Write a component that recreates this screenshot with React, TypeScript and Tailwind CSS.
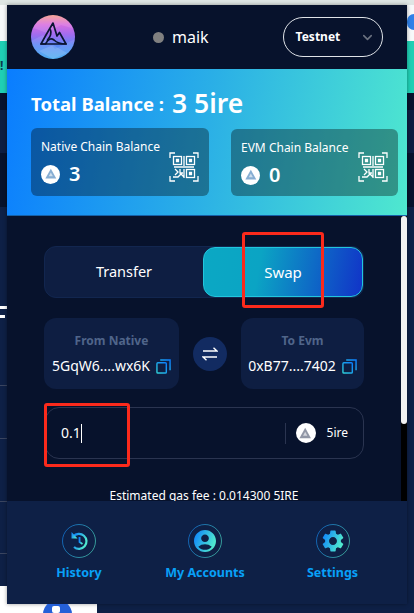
import { ChevronDown } from "lucide-react";

const font = "font-['Noto_Sans',sans-serif]";

function FireMark() {
  return (
    <svg viewBox="0 0 44 44" className="w-full h-full" fill="none">
      <path d="M0 0 H44 V14 L30 10 L16 18 L0 12 Z" fill="#ffffff" fillOpacity="0.12" />
      <path d="M0 26 L12 20 L24 34 L44 24 V44 H0 Z" fill="#ffffff" fillOpacity="0.10" />
      <path d="M8 36 L22 30 L36 38 L22 44 Z" fill="#ffffff" fillOpacity="0.14" />
      <g stroke="#0b1533" strokeWidth="1.700" strokeLinejoin="round" strokeLinecap="round">
        <path d="M22 8 L15 20 L10 29 L14.500 29 C17 24 20 22.500 23 25 C26 28 29 29 35 29 L28.500 17.500 L26 21 L22 8 Z" />
        <path d="M10 29 L35 29" />
        <path d="M19.500 15 C21 19 19 22 16.500 25" />
      </g>
    </svg>
  );
}

function TokenIcon({ color, className }: { color: string; className: string }) {
  return (
    <div className={`rounded-full bg-white flex items-center justify-center shrink-0 ${className}`}>
      <svg viewBox="0 0 20 20" className="w-[72%] h-[72%]" fill={color}>
        <path d="M10 2.500 L18 17 L2 17 Z" fillOpacity="0.75" />
        <path d="M10 8 L13 13.500 L7 13.500 Z" fill="#ffffff" fillOpacity="0.6" />
      </svg>
    </div>
  );
}

function QrIcon() {
  return (
    <svg viewBox="0 0 30 30" className="w-[30px] h-[30px]" fill="none" stroke="#ffffff" strokeWidth="1.300">
      <path d="M1 6 V1 H6 M24 1 H29 V6 M29 24 V29 H24 M6 29 H1 V24" />
      <rect x="4.500" y="4.500" width="8" height="8" />
      <rect x="17.500" y="4.500" width="8" height="8" />
      <rect x="17.500" y="17.500" width="8" height="8" />
      <path d="M5 15 H25 M15 4 V14 M6 17 L9 20 L6 23 M11 17 V21 H14 M4 25 H9 L12 22 L15 25 M15 17 V26" />
      <path d="M7.500 7.500 h2 v2 h-2 z M20.500 7.500 h2 v2 h-2 z M20.500 20.500 h2 v2 h-2 z" fill="#ffffff" />
    </svg>
  );
}

function CopyIcon() {
  return (
    <svg viewBox="0 0 16 16" className="w-[15px] h-[15px] shrink-0" fill="none" strokeWidth="1.500">
      <defs>
        <linearGradient id="copyGrad" x1="0" y1="1" x2="1" y2="0">
          <stop offset="0" stopColor="#2fd0d8" />
          <stop offset="1" stopColor="#0a7dff" />
        </linearGradient>
      </defs>
      <rect x="1" y="4" width="10" height="11" rx="1" stroke="url(#copyGrad)" />
      <path d="M4.500 1 H15 V12" stroke="url(#copyGrad)" />
    </svg>
  );
}

function NavIcon({ id, children }: { id: string; children: React.ReactNode }) {
  return (
    <svg viewBox="0 0 34 34" className="w-[34px] h-[34px]" fill="none">
      <defs>
        <linearGradient id={id} x1="0" y1="0" x2="1" y2="0.400">
          <stop offset="0" stopColor="#0a7dff" />
          <stop offset="1" stopColor="#4fe8cf" />
        </linearGradient>
      </defs>
      <circle cx="17" cy="17" r="16.500" stroke={`url(#${id})`} strokeOpacity="0.600" />
      {children}
    </svg>
  );
}

function NavItem({ label, width, icon }: { label: string; width: string; icon: React.ReactNode }) {
  return (
    <div className={`flex flex-col items-center ${width}`}>
      {icon}
      <span className="mt-[5px] text-[12.500px] leading-[20px] font-bold text-[#08a0f8] whitespace-nowrap">{label}</span>
    </div>
  );
}

function AddressCard({ title, value, width }: { title: string; value: string; width: string }) {
  return (
    <div className={`h-[71px] rounded-[12px] bg-[#0e1e42] flex flex-col items-center pt-[13px] ${width}`}>
      <span className="text-[12px] leading-[20px] font-bold text-[#50658a]">{title}</span>
      <div className="flex items-center gap-[6px] mt-[5px]">
        <span className="text-[14px] leading-[20px] text-white whitespace-nowrap">{value}</span>
        <CopyIcon />
      </div>
    </div>
  );
}

function BalanceCard({ title, value, className }: { title: string; value: string; className: string }) {
  return (
    <div className={`rounded-[6px] pl-[10px] pr-[10px] pt-[9px] flex justify-between bg-black/35 ${className}`}>
      <div>
        <div className="text-[12px] leading-[20px] text-white whitespace-nowrap">{title}</div>
        <div className="flex items-center gap-[9px] mt-[5px]">
          <TokenIcon color="#5f93c4" className="w-[19px] h-[19px]" />
          <span className="text-[20px] leading-[24px] font-semibold text-white">{value}</span>
        </div>
      </div>
      <div className="self-end mb-[14px]">
        <QrIcon />
      </div>
    </div>
  );
}

export default function App() {
  return (
    <div className={`relative w-[414px] h-[613px] overflow-hidden bg-[#0e2046] ${font}`}>
      {/* page behind the extension popup */}
      <div className="flex flex-col h-full">
        <div className="h-[5px] bg-[#dfe6e4]" />
        <div className="h-[36px] bg-[#f7f9fa]" />
        <div className="h-[52px] bg-[#1fcfb4]" />
        <div className="h-[17px] bg-[#07122c]" />
        <div className="h-[43px] bg-[#0e1e42]" />
        <div className="h-[54px] bg-[#07122c]" />
        <div className="h-[379px] bg-[#0e2046]" />
        <div className="flex-1 flex">
          <div className="w-[97px] bg-white" />
          <div className="flex-1 bg-[#0e2046]" />
        </div>
      </div>

      {/* bits of the page showing at the edges */}
      <span className="absolute left-0 top-[60px] text-[12px] leading-[12px] font-bold text-[#0b3a4a]">!</span>
      <div className="absolute left-[407px] top-[14px] w-[14px] h-[16px] rounded-full bg-[#2f80e8]" />
      <div className="absolute left-0 top-[306px] w-[7px] h-[3px] bg-white" />
      <div className="absolute left-0 top-[315px] w-[5px] h-[3px] bg-white" />
      <div className="absolute left-0 top-[385px] w-[7px] h-px bg-[#3a4560]" />
      <div className="absolute left-0 top-[438px] w-[7px] h-px bg-[#3a4560]" />
      <div className="absolute left-0 top-[501px] w-[7px] h-px bg-[#3a4560]" />
      <div className="absolute left-0 top-[553px] w-[7px] h-px bg-[#3a4560]" />

      {/* popup */}
      <div className="absolute left-[7px] top-[5px] w-[400px] h-[599px] flex flex-col overflow-hidden shadow-[0_0_4px_rgba(0,0,0,0.4)]">
        <header className="h-[64px] shrink-0 bg-[#07122c] flex items-center pl-[24px]">
          <div className="w-[44px] h-[44px] rounded-full overflow-hidden bg-[linear-gradient(180deg,#f49a8a_0%,#d86ee0_22%,#a06cf0_45%,#5e88f5_68%,#3aa6f0_100%)]">
            <FireMark />
          </div>
          <div className="flex items-center ml-[78px] gap-[8px]">
            <span className="w-[11px] h-[11px] rounded-full bg-[#808080]" />
            <span className="text-[16px] leading-[20px] text-white">maik</span>
          </div>
          <div className="ml-[74px] w-[100px] h-[40px] rounded-full border border-[#dfe3e8] flex items-center pl-[12px]">
            <span className="text-[12px] font-bold text-white">Testnet</span>
            <ChevronDown className="ml-[20px] w-[15px] h-[15px] text-[#6b7280]" strokeWidth={2.5} />
          </div>
        </header>

        <section className="h-[147px] shrink-0 bg-[linear-gradient(100deg,#0a7dff_0%,#2bb0e6_50%,#4fe8cf_100%)] border-b border-[#1560a8] pl-[24px] pr-[9px] pt-[20px]">
          <div className="flex items-center h-[30px] text-white font-semibold whitespace-nowrap">
            <span className="text-[18.500px] font-bold">Total Balance :</span>
            <span className="text-[26.500px] ml-[8px]">3 5ire</span>
          </div>
          <div className="flex justify-between mt-[9px]">
            <BalanceCard title="Native Chain Balance" value="3" className="w-[178px] h-[68px]" />
            <BalanceCard title="EVM Chain Balance" value="0" className="w-[167px] h-[67px] mt-[1px]" />
          </div>
        </section>

        <main className="flex-1 relative bg-[#07122c] pl-[37px] pt-[30px]">
          <div className="w-[320px] h-[52px] rounded-[12px] bg-[#0e1e42] border border-[#12264f] flex items-stretch">
            <div className="flex-1 flex items-center justify-center text-[14.500px] text-white">Transfer</div>
            <div className="w-[160px] flex items-center justify-center text-[15px] text-white rounded-[12px] border border-[#22c6dc] bg-[linear-gradient(100deg,#0ba8c4_0%,#0ba4c4_35%,#1133c8_100%)]">
              Swap
            </div>
          </div>

          <div className="flex items-center mt-[20px] w-[320px]">
            <AddressCard title="From Native" value="5GqW6....wx6K" width="w-[135px]" />
            <div className="mx-[14px] w-[34px] h-[34px] rounded-full bg-[#122b61] flex items-center justify-center shrink-0">
              <svg viewBox="0 0 16 16" className="w-[16px] h-[16px]" fill="none" stroke="#ffffff" strokeWidth="1.400">
                <path d="M1 5 H15 L11.500 1.800 M15 11 H1 L4.500 14.200" />
              </svg>
            </div>
            <AddressCard title="To Evm" value="0xB77....7402" width="w-[123px]" />
          </div>

          <div className="mt-[18px] w-[319px] ml-[1px] h-[52px] rounded-[14px] border border-[#2a3450] flex items-center pl-[15px] pr-[15px]">
            <span className="text-[14px] leading-[20px] text-white">0.1</span>
            <span className="w-px h-[19px] bg-white" />
            <span className="ml-auto w-px h-[21px] bg-[#2a3450]" />
            <TokenIcon color="#6c7488" className="ml-[10px] w-[20px] h-[20px]" />
            <span className="ml-[11px] text-[12px] text-white">5ire</span>
          </div>

          <p className="absolute left-0 w-[394px] top-[271px] text-center text-[12px] leading-[18px] text-white whitespace-nowrap">
            Estimated gas fee : 0.014300 5IRE
          </p>

          {/* scrollbar */}
          <div className="absolute right-0 top-0 bottom-0 w-[6px] bg-black">
            <div className="h-[208px] rounded-[3px] bg-[#f1f1f1]" />
          </div>
        </main>

        <footer className="h-[103px] shrink-0 bg-[#0e2046] flex pt-[23px] relative">
          <NavItem
            label="History"
            width="w-[144px]"
            icon={
              <NavIcon id="navHistory">
                <path d="M11.300 12.500 A7.500 7.500 0 1 1 12 23" stroke="url(#navHistory)" strokeWidth="2.200" />
                <path d="M9.500 8 V14.500 H15.500 Z" fill="url(#navHistory)" />
                <path d="M17.500 13 V18 L20.500 20" stroke="url(#navHistory)" strokeWidth="1.800" />
              </NavIcon>
            }
          />
          <NavItem
            label="My Accounts"
            width="w-[108px]"
            icon={
              <NavIcon id="navAccount">
                <g transform="translate(3.800 3.800) scale(1.100)">
                  <path
                    fill="url(#navAccount)"
                    d="M12 2C6.480 2 2 6.480 2 12s4.480 10 10 10 10-4.480 10-10S17.520 2 12 2zm0 4c1.930 0 3.500 1.570 3.500 3.500S13.930 13 12 13s-3.500-1.570-3.500-3.500S10.070 6 12 6zm0 14c-2.030 0-4.430-.820-6.140-2.880a9.947 9.947 0 0 1 12.280 0C16.430 19.180 14.030 20 12 20z"
                  />
                </g>
              </NavIcon>
            }
          />
          <NavItem
            label="Settings"
            width="w-[147px]"
            icon={
              <NavIcon id="navGear">
                <g transform="translate(3.800 3.800) scale(1.100)">
                  <path
                    fill="url(#navGear)"
                    d="M19.140 12.940c.040-.300.060-.610.060-.940 0-.320-.020-.640-.070-.940l2.030-1.580a.490.490 0 0 0 .120-.610l-1.920-3.320a.488.488 0 0 0-.590-.220l-2.390.960c-.500-.380-1.030-.700-1.620-.940l-.360-2.540a.484.484 0 0 0-.480-.410h-3.840c-.240 0-.430.170-.470.410l-.360 2.540c-.590.240-1.130.570-1.620.940l-2.390-.960c-.220-.080-.470 0-.590.220L2.740 8.870c-.120.210-.080.470.120.610l2.030 1.580c-.050.300-.090.630-.090.940s.020.640.070.940l-2.030 1.580a.490.490 0 0 0-.120.610l1.920 3.320c.120.220.370.290.590.220l2.390-.960c.500.380 1.030.700 1.620.940l.360 2.540c.050.240.240.410.480.410h3.840c.240 0 .440-.170.470-.410l.360-2.540c.590-.240 1.130-.560 1.620-.940l2.390.960c.220.080.470 0 .590-.220l1.920-3.320c.120-.220.070-.470-.120-.610l-2.010-1.580zM12 15.600c-1.980 0-3.600-1.620-3.600-3.600s1.620-3.600 3.600-3.600 3.600 1.620 3.600 3.600-1.620 3.600-3.600 3.600z"
                  />
                </g>
              </NavIcon>
            }
          />
        </footer>
      </div>

      {/* red annotation boxes */}
      <div className="absolute left-[242px] top-[232px] w-[82px] h-[76px] border-[3px] border-[#fb2a1c] rounded-[3px]" />
      <div className="absolute left-[44px] top-[403px] w-[86px] h-[64px] border-[3px] border-[#fb2a1c] rounded-[3px]" />

      {/* logo peeking out below the popup */}
      <div className="absolute left-[43px] top-[600px] w-[29px] h-[29px] rounded-full bg-[#2560d8]" />
      <div className="absolute left-[7px] top-[596px] w-[100px] h-[8px] bg-[#0e2046]" />
      <div className="absolute left-[52px] top-[606px] w-[8px] h-[7px] bg-white rounded-[2px]" />
    </div>
  );
}
